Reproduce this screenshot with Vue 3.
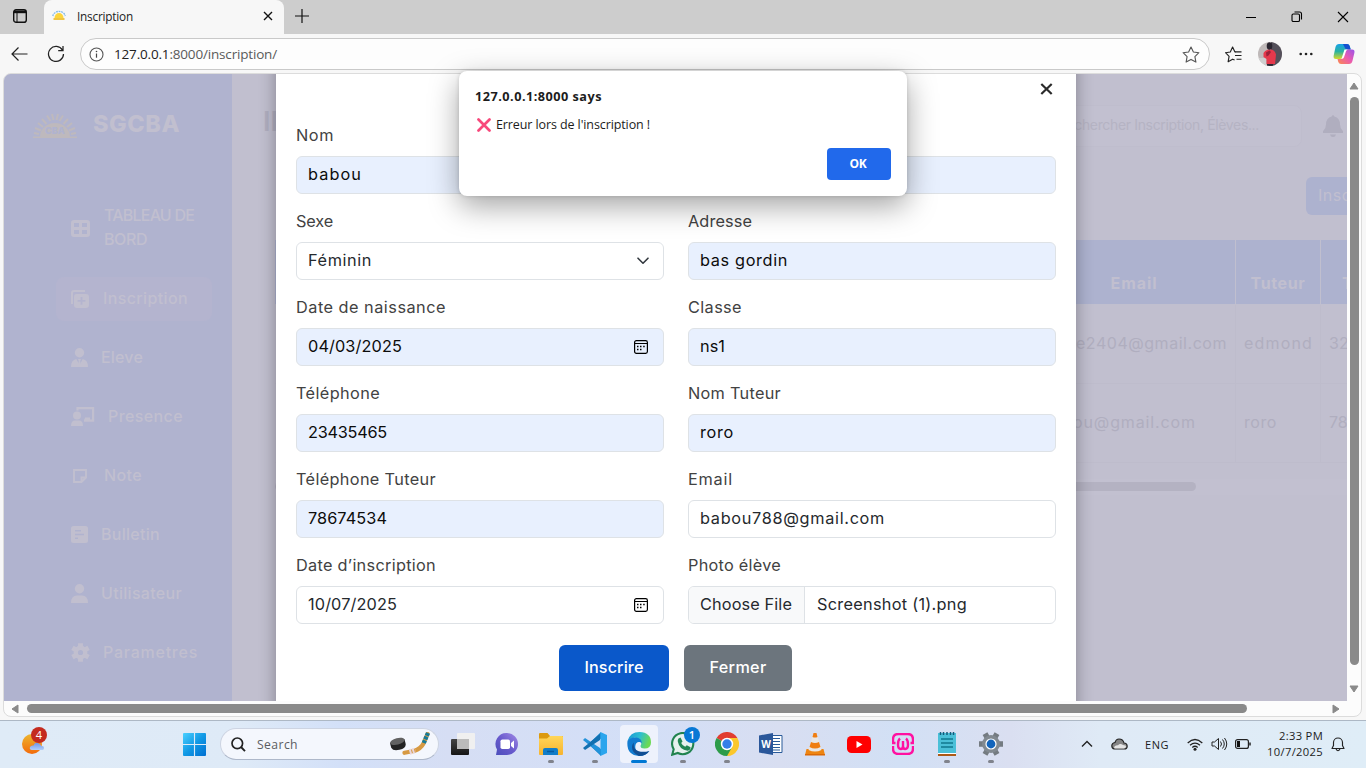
<script setup>
// Spreads a label's letters so that it takes up the given width.
const vFit = {
  mounted(el, { value }) {
    const w = el.getBoundingClientRect().width
    el.style.letterSpacing = (value - w) / el.textContent.length + 'px'
  },
}

const fields = [
  { label: 'Nom', lw: 38, value: 'babou', vw: 54, filled: true },
  { label: '', lw: 0, value: '', vw: 0, filled: true },
  { label: 'Sexe', lw: 37, value: 'Féminin', vw: 64, kind: 'select' },
  { label: 'Adresse', lw: 64, value: 'bas gordin', vw: 88, filled: true },
  { label: 'Date de naissance', lw: 150, value: '04/03/2025', vw: 94, filled: true, kind: 'date' },
  { label: 'Classe', lw: 54, value: 'ns1', vw: 25, filled: true },
  { label: 'Téléphone', lw: 84, value: '23435465', vw: 79, filled: true },
  { label: 'Nom Tuteur', lw: 93, value: 'roro', vw: 34, filled: true },
  { label: 'Téléphone Tuteur', lw: 140, value: '78674534', vw: 79, filled: true },
  { label: 'Email', lw: 45, value: 'babou788@gmail.com', vw: 185 },
  { label: 'Date d’inscription', lw: 140, value: '10/07/2025', vw: 89, kind: 'date' },
  { label: 'Photo élève', lw: 93, value: 'Screenshot (1).png', vw: 150, kind: 'file' },
]
</script>

<template>
  <div class="screen">
    <div class="tabs">
      <svg class="tabmenu" width="14" height="14" viewBox="0 0 14 14"><rect x=".7" y=".7" width="12.6" height="12.6" rx="2.4" fill="none" stroke="#111" stroke-width="1.4" /><path d="M1 1.5h12v2.7H1z" fill="#111" /><path d="M4 4v9.500" stroke="#111" stroke-width="1" /></svg>
      <div class="tab">
        <svg width="14" height="12" viewBox="0 0 14 12"><path d="M.8 6A6.300 5.600 0 0 1 13.200 6" fill="none" stroke="#7cb8ea" stroke-width="1.300" stroke-dasharray="1.800 .8" /><path d="M2.500 8a4.500 5 0 0 1 9 0z" fill="#fbd53c" /><path d="M1.500 9h11" stroke="#efc544" stroke-width="2" /></svg>
        <span v-fit="56" class="tabtitle">Inscription</span>
        <svg class="tabclose" width="10" height="10" viewBox="0 0 10 10"><path d="M1 1l8 8M9 1L1 9" stroke="#111" stroke-width="1.400" /></svg>
      </div>
      <svg class="newtab" width="14" height="14" viewBox="0 0 14 14"><path d="M7 0v14M0 7h14" stroke="#111" stroke-width="1.200" /></svg>
      <div class="winbtns">
        <svg width="12" height="12" viewBox="0 0 12 12"><path d="M1 6.500h10" stroke="#000" /></svg>
        <svg width="12" height="12" viewBox="0 0 12 12"><rect x="1" y="3" width="7.500" height="7.500" rx="1.300" fill="none" stroke="#000" stroke-width="1.100" /><path d="M3.500 1h5a2 2 0 0 1 2 2v5.500" fill="none" stroke="#000" stroke-width="1.100" /></svg>
        <svg width="12" height="12" viewBox="0 0 12 12"><path d="M1 1l10 10M11 1L1 11" stroke="#000" stroke-width="1.100" /></svg>
      </div>
    </div>

    <div class="toolbar">
      <svg class="back" width="17" height="16" viewBox="0 0 17 16"><path d="M16.500 8H1M7.500 1.500L1 8l6.500 6.500" fill="none" stroke="#222" stroke-width="1.200" /></svg>
      <svg class="reload" width="18" height="18" viewBox="0 0 18 18"><path d="M15.500 5.200A7.500 7.500 0 1 0 16.500 9M16 1v4.700h-4.800" fill="none" stroke="#222" stroke-width="1.250" /></svg>
      <div class="address">
        <svg width="15" height="15" viewBox="0 0 15 15"><circle cx="7.500" cy="7.500" r="6.500" fill="none" stroke="#555" stroke-width="1.100" /><path d="M7.500 6.500v4.200" stroke="#444" stroke-width="1.200" /><circle cx="7.500" cy="4.500" r=".8" fill="#444" /></svg>
        <span v-fit="163" class="url">127.0.0.1<i>:8000/inscription/</i></span>
        <svg class="star" width="18" height="17" viewBox="0 0 18 17"><path d="M9 1l2.400 5 5.500.7-4 3.900 1 5.500L9 13.400l-4.900 2.700 1-5.500-4-3.900 5.500-.7z" fill="none" stroke="#555" stroke-width="1.100" stroke-linejoin="round" /></svg>
      </div>
      <svg class="favs" width="18" height="17" viewBox="0 0 18 17"><path d="M11 5.800H9.800L7.600 1 5.300 6l-4.800.7 3.600 3.600-1 5.500 4.500-2.600 2 .9" fill="none" stroke="#222" stroke-width="1.150" stroke-linejoin="round" /><path d="M10.500 5.800h6M10 9.500h6.500M11.500 13.200h5" stroke="#222" stroke-width="1.150" /></svg>
      <svg class="avatar" width="24" height="24" viewBox="0 0 24 24"><defs><clipPath id="av"><circle cx="12" cy="12" r="12" /></clipPath></defs><g clip-path="url(#av)"><path d="M0 0h24v24H0z" fill="#bfb9b9" /><path d="M13 0h11v24H13z" fill="#54505a" /><path d="M0 16h8v8H0z" fill="#cfcfcf" /><path d="M5.500 11q1-2.500 4.500-3.500h3.500q3.500 1 4.500 5l-.5 5-.5 4.500H8.500L8.500 17l-3-2z" fill="#e5394c" /><path d="M9 22h6v2H9z" fill="#2d2633" /><ellipse cx="11.500" cy="4" rx="2.800" ry="3.800" fill="#292530" /><path d="M8 10.500l3.500-2 1.500 1.500-2.500 3.500-2 1z" fill="#9a2138" /></g></svg>
      <svg class="dots" width="14" height="4" viewBox="0 0 14 4"><circle cx="1.700" cy="2" r="1.300" /><circle cx="7" cy="2" r="1.300" /><circle cx="12.300" cy="2" r="1.300" /></svg>
      <svg class="copilot" width="22" height="20" viewBox="0 0 22 20"><defs><linearGradient id="cp1" x2="0" y2="1"><stop stop-color="#18a2e8" /><stop offset=".5" stop-color="#2ab2a0" /><stop offset="1" stop-color="#d8d829" /></linearGradient><linearGradient id="cp2" x1="1" x2="0" y2="1"><stop stop-color="#9a54ea" /><stop offset=".5" stop-color="#eb5baf" /><stop offset="1" stop-color="#fb8c4a" /></linearGradient></defs><path d="M6 0h8q2 0 2.700 2l1 3.500H14q-1.500 0-2 1.600l-2 6Q9 15 7 15H3Q0 15 .7 11.500L2.500 3Q3.300 0 6 0z" fill="url(#cp1)" /><path d="M10 0h4q2 0 2.700 2l1 3.500H14q-1.500 0-2-1.500z" fill="#1650cf" /><path d="M16 20H8q-2 0-2.700-2L4.500 15H8q1.500 0 2-1.700l2-6Q13 5.500 15 5.500h4q3 0 2.400 3.200l-1.900 8Q18.700 20 16 20z" fill="url(#cp2)" /><path d="M8.500 14.800l3-9.300h3.300q-1.400.5-1.800 1.800l-2 6q-.5 1.500-2.500 1.500z" fill="#fff" /></svg>
    </div>

    <div class="frame">
      <div class="view">
        <div class="site">
          <aside>
            <div class="brand">
              <svg width="46" height="27" viewBox="0 0 46 27"><path d="M1 26.500h44M2 22l5 1M3 17l6 2.500M6 12l5 4M10 8l4.500 5M15 4.500l3.500 5.500M20 3l1.500 6M26 3l-1.500 6M31 4.500L27.500 10M36 8l-4.500 5M40 12l-5 4M43 17l-6 2.500M44 22l-5 1" stroke="#beb9bd" stroke-width="2" /><path d="M8 26a15 14 0 0 1 30 0z" fill="#beb9bd" /><text x="23" y="23" text-anchor="middle" fill="#b0b3cf">CBA</text></svg>
              <b v-fit="87">SGCBA</b>
            </div>
            <nav>
              <a class="tall"><svg width="19" height="17" viewBox="0 0 19 17"><path fill-rule="evenodd" d="M3 0h13q3 0 3 3v11q0 3-3 3H3q-3 0-3-3V3Q0 0 3 0zM3 3v4h5V3zM11 3v4h5V3zM3 10v4h5v-4zM11 10v4h5v-4z" /></svg><span><em v-fit="90">TABLEAU DE</em><br><em v-fit="43">BORD</em></span></a>
              <a class="on"><svg width="18" height="18" viewBox="0 0 18 18"><path d="M14 1H3Q1 1 1 3v11" fill="none" stroke="#c1bfcf" stroke-width="2" /><path fill-rule="evenodd" d="M5.500 4H15q3 0 3 3v8q0 3-3 3H6q-3 0-3-3V7q0-3 2.500-3zM9.600 7v3h-3v1.700h3v3h1.800v-3h3V10h-3V7z" /></svg><span><em v-fit="85">Inscription</em></span></a>
              <a><svg width="17" height="19" viewBox="0 0 17 19"><circle cx="8.500" cy="4.700" r="4.700" /><path d="M0 19q0-7 5.300-8l3.200 6 3.200-6Q17 12 17 19z" /><path d="M7 11h3l-.8 2 .8 4-1.500 2L7 17l.8-4z" /></svg><span class="near"><em v-fit="42">Eleve</em></span></a>
              <a><svg width="24" height="19" viewBox="0 0 24 19"><path d="M6.500 3.500V1.200h15.600v12.500H13" fill="none" stroke="#c1bfcf" stroke-width="2.200" /><circle cx="6" cy="8.500" r="4" /><path d="M0 19q0-5.500 4-5.500h4q4 0 4 5.500zM14 10.500h5V14h-6z" /></svg><span class="near"><em v-fit="75">Presence</em></span></a>
              <a><svg class="in" width="14" height="14" viewBox="0 0 14 14"><path d="M1 1h12v7.500L8.500 13H1zM8.500 13V8.500H13" fill="none" stroke="#c1bfcf" stroke-width="1.900" /></svg><span><em v-fit="38">Note</em></span></a>
              <a><svg width="17" height="17" viewBox="0 0 17 17"><path fill-rule="evenodd" d="M2.500 0h12Q17 0 17 2.500v12q0 2.500-2.500 2.500h-12Q0 17 0 14.500v-12Q0 0 2.500 0zM4 4v1.500h6V4zM4 7.700v1.600h9V7.700zM4 11.500V13h3v-1.500z" /></svg><span class="near"><em v-fit="59">Bulletin</em></span></a>
              <a><svg width="17" height="19" viewBox="0 0 17 19"><circle cx="8.500" cy="4.700" r="4.700" /><path d="M0 19q0-7.500 6-7.500h5q6 0 6 7.500z" /></svg><span class="near"><em v-fit="81">Utilisateur</em></span></a>
              <a><svg width="19" height="19" viewBox="-10 -10 20 20"><circle r="5" fill="none" stroke="#c1bfcf" stroke-width="4.500" /><path d="M0-9.800V-5M0 9.800V5M-8.500-4.900L-4-2.500M8.500 4.900L4 2.500M-8.500 4.900L-4 2.500M8.500-4.900L4-2.500" stroke="#c1bfcf" stroke-width="5.200" /></svg><span class="near"><em v-fit="95">Parametres</em></span></a>
            </nav>
          </aside>
          <main>
            <header>
              <h1>II</h1>
              <div class="find"><span v-fit="201">Rechercher Inscription, Élèves...</span></div>
              <svg width="20" height="22" viewBox="0 0 20 22"><path d="M8.700 1.500a1.300 1.300 0 0 1 2.600 0Q17 3 17 9.500q0 4 3 6.800V18H0v-1.700q3-2.800 3-6.800Q3 3 8.700 1.500zM7 19.500h6Q12.500 22 10 22t-3-2.500z" fill="#b0aebf" /></svg>
            </header>
            <div class="add"><span v-fit="85">Inscription</span></div>
            <div class="table">
              <div class="th"></div><div class="th email"><b v-fit="47">Email</b></div><div class="th"><b v-fit="55">Tuteur</b></div><div class="th last"><b>Tel</b></div>
              <div></div><div><span v-fit="151">e2404@gmail.com</span></div><div><span v-fit="69">edmond</span></div><div><span>3243</span></div>
              <div></div><div class="second"><span v-fit="123">ou@gmail.com</span></div><div><span v-fit="33">roro</span></div><div><span>7867</span></div>
            </div>
            <div class="bar"><i></i></div>
          </main>
        </div>

        <section class="modal">
          <svg class="x" width="13" height="12" viewBox="0 0 13 12"><path d="M1.300 1l10.400 10M11.700 1L1.300 11" stroke="#2b2b2b" stroke-width="2.200" /></svg>
          <div class="form">
            <div v-for="(f, i) in fields" :key="i" class="field">
              <label><span v-if="f.label" v-fit="f.lw">{{ f.label }}</span></label>
              <div class="input" :class="{ filled: f.filled }">
                <span v-if="f.kind === 'file'" class="choose"><span v-fit="92">Choose File</span></span>
                <span v-if="f.value" v-fit="f.vw" class="value">{{ f.value }}</span>
                <svg v-if="f.kind === 'select'" class="chev" width="12" height="8" viewBox="0 0 12 8"><path d="M1 1.200l5 5 5-5" fill="none" stroke="#343a40" stroke-width="1.600" stroke-linecap="round" stroke-linejoin="round" /></svg>
                <svg v-if="f.kind === 'date'" class="cal" width="14" height="14" viewBox="0 0 14 14"><rect x=".6" y=".6" width="12.800" height="12.800" rx="1.800" fill="none" stroke="#000" stroke-width="1.200" /><path d="M1 3.500h12" stroke="#000" /><path d="M3 6.500h1.500M6 6.500h1.500M9.200 6.500h1.500M3 9.500h1.500M6 9.500h1.500" stroke="#000" stroke-width="1.300" /></svg>
              </div>
            </div>
          </div>
          <div class="actions">
            <button class="primary"><span v-fit="59">Inscrire</span></button>
            <button><span v-fit="57">Fermer</span></button>
          </div>
        </section>
      </div>
      <div class="vscroll">
        <svg width="10" height="8" viewBox="0 0 10 8"><path d="M5 1l4 6H1z" fill="#8a8a8a" stroke="#8a8a8a" stroke-linejoin="round" /></svg>
        <i></i>
        <svg width="10" height="8" viewBox="0 0 10 8"><path d="M5 7l4-6H1z" fill="#8a8a8a" stroke="#8a8a8a" stroke-linejoin="round" /></svg>
      </div>
      <div class="hscroll">
        <svg width="8" height="10" viewBox="0 0 8 10"><path d="M1 5l6-4v8z" fill="#8a8a8a" stroke="#8a8a8a" stroke-linejoin="round" /></svg>
        <i></i>
        <svg class="r" width="8" height="10" viewBox="0 0 8 10"><path d="M7 5L1 1v8z" fill="#8a8a8a" stroke="#8a8a8a" stroke-linejoin="round" /></svg>
      </div>
    </div>

    <div class="dialog">
      <b v-fit="127">127.0.0.1:8000 says</b>
      <p><svg width="14" height="14" viewBox="0 0 14 14"><path d="M1.500 1.500l11 11M12.500 1.500l-11 11" stroke="#f8487b" stroke-width="2.700" stroke-linecap="round" /></svg><span v-fit="154">Erreur lors de l'inscription !</span></p>
      <button><span v-fit="17">OK</span></button>
    </div>

    <footer>
      <div class="weather">
        <svg width="26" height="28" viewBox="0 0 26 28"><defs><linearGradient id="sun" x2="0" y2="1"><stop stop-color="#edb62f" /><stop offset="1" stop-color="#f36b0b" /></linearGradient><linearGradient id="cl" x2="0" y2="1"><stop stop-color="#6f94e8" /><stop offset="1" stop-color="#b2cffa" /></linearGradient></defs><circle cx="10" cy="17" r="10" fill="url(#sun)" /><path d="M10 23q-3-.5-2-3 1-2 3.500-1.500Q13 14 17.500 17q1.500.5 1.500 2 3-.5 3 2t-2 2z" fill="url(#cl)" /><circle cx="17" cy="8" r="8" fill="#c42b1f" /></svg>
        <span>4</span>
      </div>
      <svg class="start" width="24" height="24" viewBox="0 0 24 24"><defs><linearGradient id="w" x2="1" y2="1"><stop stop-color="#4bd0ff" /><stop offset=".5" stop-color="#1199e5" /><stop offset="1" stop-color="#006fd1" /></linearGradient></defs><path d="M0 1q0-1 1-1h10.400v11.400H0zM12.600 0H23q1 0 1 1v10.400H12.600zM0 12.600h11.400V24H1q-1 0-1-1zM12.600 12.600H24V23q0 1-1 1H12.600z" fill="url(#w)" /></svg>
      <div class="search">
        <svg width="15" height="15" viewBox="0 0 15 15"><circle cx="6.300" cy="6.300" r="5.300" fill="none" stroke="#222" stroke-width="1.700" /><path d="M10 10l4 4.200" stroke="#222" stroke-width="1.900" /></svg>
        <span v-fit="41">Search</span>
        <svg class="puck" width="42" height="24" viewBox="0 0 42 24"><g transform="rotate(-14 9 12)"><path d="M1.500 9v5q1 4 7.500 4t7.500-4V9z" fill="#232323" /><ellipse cx="9" cy="9.300" rx="7.500" ry="3.300" fill="#626262" /></g><path d="M38.500 2L34.500 11.500Q32 16.500 25 19l-9.500 1.800" fill="none" stroke="#d79a43" stroke-width="4.200" stroke-linecap="round" stroke-linejoin="round" /><path d="M39 1L34.800 11" stroke="#167b98" stroke-width="4.300" stroke-dasharray="3 1" /><path d="M20.500 20l6-1.700" stroke="#ead7dc" stroke-width="5.500" stroke-dasharray="2 1" /></svg>
      </div>
      <div class="apps">
        <div><svg width="24" height="22" viewBox="0 0 24 22"><defs><linearGradient id="tv" x2="0" y2="1"><stop stop-color="#444" /><stop offset="1" stop-color="#151515" /></linearGradient></defs><rect y="6" width="18" height="16" rx="1" fill="url(#tv)" /><rect x="6" width="18" height="16" rx="1" fill="#f0f0f0" /><path d="M6 6h12v10H6z" fill="#bbb" /></svg></div>
        <div><svg width="24" height="24" viewBox="0 0 24 24"><defs><linearGradient id="ch" x1="1" x2="0" y2="1"><stop stop-color="#a28be6" /><stop offset=".5" stop-color="#6a5bcd" /><stop offset="1" stop-color="#4b4ebb" /></linearGradient></defs><path d="M12 1a11 11 0 1 1 0 22H1l1-5.500A11 11 0 0 1 12 1z" fill="url(#ch)" /><rect x="5.500" y="7.500" width="9.500" height="9.500" rx="1.800" fill="#fff" /><path d="M16 11l3-2.500v8L16 14z" fill="#fff" /></svg></div>
        <div class="run"><svg width="24" height="22" viewBox="0 0 24 22"><defs><linearGradient id="fd" x2="0" y2="1"><stop stop-color="#ffd659" /><stop offset="1" stop-color="#f7b32e" /></linearGradient></defs><path d="M0 1q0-1 1-1h7.500l2.500 3h13v6H0z" fill="#dc9a10" /><path d="M0 5.500h8l3-2.500h12q1 0 1 1v17q0 1-1 1H1q-1 0-1-1z" fill="url(#fd)" /><path d="M4 22v-5q0-2 2-2h11q2 0 2 2v5z" fill="#117dc9" /><path d="M8 18.500h7" stroke="#075ba0" stroke-width="1.500" /></svg></div>
        <div class="run"><svg width="24" height="24" viewBox="0 0 24 24"><path d="M18 0L5.500 12 18 24V17L9 12l9-5.200z" fill="#1587cd" /><path d="M2 6L0 8l17 14v-6z" fill="#2392da" /><path d="M2 18L0 16 17 2v6z" fill="#1270b1" /><path d="M17.500 0L24 3v18l-6.500 3z" fill="#2ba5ed" /></svg></div>
        <div class="active"><svg width="24" height="24" viewBox="0 0 24 24"><defs><linearGradient id="eg" x2="1" y2=".3"><stop stop-color="#1794d6" /><stop offset=".55" stop-color="#2dbed0" /><stop offset="1" stop-color="#6bd955" /></linearGradient></defs><path d="M.5 9Q3 0 12.500 0 24 .5 24 10.500q0 6-6.500 6-4 0-4-2.500c3-5-2-9-7-8Q2 7 .5 9z" fill="url(#eg)" /><path d="M.5 9Q3 5 9 5.500c4 .3 6 3 5.800 6-3-3.500-7-.5-6.500 4 .6 6 7 7 14 3.500Q19 24 12 24-1 23 .5 9z" fill="#137cd0" /><path d="M7 10.500c-2 8 6 11 15.300 8.500Q19 24 12 24 5 21 5 15q0-3 2-4.500z" fill="#124f93" /></svg></div>
        <div class="run wa"><svg width="24" height="24" viewBox="0 0 24 24"><path d="M1.200 22.700l1.500-5.500A10.600 10.600 0 1 1 6.800 21z" fill="#e6f1ee" stroke="#21834f" stroke-width="2.100" /><path d="M7.500 6.500l2-1 2 4-1.300 1.600q1.200 2.700 4 3.700l1.600-1.600 3.700 2q.3 2.700-2.900 3.500Q8.500 18 6.800 9.500q-.3-1.700.7-3z" fill="#218653" /></svg><b>1</b></div>
        <div class="run"><svg width="24" height="24" viewBox="0 0 24 24"><path d="M12 12L1.600 6A12 12 0 0 1 22.400 6z" fill="#e13d30" /><path d="M12 12V24A12 12 0 0 0 22.400 6H12z" fill="#fbc72b" /><path d="M12 12l5.200 3L12 24A12 12 0 0 1 1.600 6z" fill="#2d9c4a" /><circle cx="12" cy="12" r="6.200" fill="#fff" /><circle cx="12" cy="12" r="4.700" fill="#357ee8" /></svg></div>
        <div><svg class="word" width="24" height="22" viewBox="0 0 24 22"><path d="M12 2.500h11v17H12z" fill="#fff" stroke="#295a99" /><path d="M14 5.500h7M14 8.500h7M14 11.500h7M14 14.500h7M14 17h7" stroke="#295a99" stroke-width="1" /><path d="M0 2.500L14 0v22L0 19.500z" fill="#2a579a" /><text x="7" y="15" text-anchor="middle" fill="#fff">W</text></svg></div>
        <div><svg width="20" height="24" viewBox="0 0 20 24"><path d="M1.500 17h17l1.500 6H0z" fill="#ee8511" /><path d="M8.500 1h3l5 17q-6.500 3-13 0z" fill="#e9e7e5" /><path d="M8.500 1h3l1 4q-2.500 1-5 0zM6 10q4 2 8 0l1.500 5q-5.500 3-11 0z" fill="#ef7e12" /><path d="M0 22h20v1.500H0z" fill="#dc6905" /></svg></div>
        <div><svg width="24" height="17" viewBox="0 0 24 17"><rect width="24" height="17" rx="4.500" fill="#f00" /><path d="M9.500 5v7l6-3.500z" fill="#fff" /></svg></div>
        <div><svg width="22" height="22" viewBox="0 0 22 22"><path d="M1 9V6.500Q1 1 6.500 1h9Q21 1 21 6.500V9M1 13v2.500Q1 21 6.500 21h9q5.500 0 5.500-5.500V13M0 10h3.500M18.500 10H22" fill="none" stroke="#ff11a1" stroke-width="2.400" /><path d="M8 5.500q-2 1.500-2 6 0 4.500 2.800 4.500 2.200 0 2.200-3V8v5q0 3 2.200 3 2.800 0 2.800-4.500 0-4.500-2-6" fill="none" stroke="#ff11a1" stroke-width="2.400" /></svg></div>
        <div class="run"><svg width="18" height="24" viewBox="0 0 18 24"><path d="M0 1h18v20H0z" fill="#4bc0d8" /><path d="M2.500 0v3M5.500 0v3M9 0v3M12.500 0v3M15.500 0v3" stroke="#155c7b" stroke-width="1.500" /><path d="M3 7h12M3 11h12M3 15h12" stroke="#12788e" stroke-width="1.500" /><path d="M0 21h18v1H0z" fill="#fff" /><path d="M0 22h18v2H0z" fill="#ac5a17" /></svg></div>
        <div class="run"><svg width="24" height="24" viewBox="-12 -12 24 24"><path d="M-12 0H12M-6-10.400L6 10.400M6-10.400L-6 10.400" stroke="#747b81" stroke-width="5.500" /><circle r="9" fill="#818990" /><circle r="5" fill="#1264bb" stroke="#fff" stroke-width="1.200" /></svg></div>
      </div>
      <div class="tray">
        <svg width="12" height="8" viewBox="0 0 12 8"><path d="M1 6.500l5-5 5 5" fill="none" stroke="#222" stroke-width="1.400" /></svg>
        <svg class="cloud" width="17" height="12" viewBox="0 0 17 12"><path d="M3.500 11Q.7 10.500.8 7.700T4 4.500Q5 1 8 1q4 0 5 4 3 0 3.200 3t-3 3z" fill="#858585" stroke="#222" stroke-width="1.100" /><path d="M3 10q.5-3 4-2.700Q9 5 12 7q3 0 3 1.500T13 10.400H4z" fill="#e4e4e4" /></svg>
        <span v-fit="24" class="eng">ENG</span>
        <svg class="wifi" width="16" height="13" viewBox="0 0 16 13"><path d="M.7 5Q8-2 15.300 5M3 7.300q5-4.500 10 0M5.300 9.500q2.700-2.500 5.400 0" fill="none" stroke="#222" stroke-width="1.200" /><circle cx="8" cy="11.300" r="1.500" fill="#222" /></svg>
        <svg class="vol" width="17" height="14" viewBox="0 0 17 14"><path d="M1 5h2.500L7.500 1.500v11L3.500 9H1z" fill="none" stroke="#222" /><path d="M9.500 4.500q2 2.500 0 5M11.500 2.500q3.500 4.500 0 9M13.500 1q4.500 6 0 12" fill="none" stroke="#222" /></svg>
        <svg class="bat" width="16" height="10" viewBox="0 0 16 10"><rect x=".6" y=".6" width="12.800" height="8.800" rx="2" fill="none" stroke="#222" stroke-width="1.200" /><path d="M2 2h3v6H2z" fill="#111" /><path d="M15 3.500v3" stroke="#222" stroke-width="1.500" /></svg>
        <div class="clock"><span v-fit="44">2:33 PM</span><br><span v-fit="56">10/7/2025</span></div>
        <svg width="14" height="15" viewBox="0 0 14 15"><path d="M2.500 8.500V5.500a4.500 4.500 0 0 1 9 0v3L13 11.500H1zM5 12q2 3.500 4 0" fill="none" stroke="#222" stroke-width="1.150" stroke-linejoin="round" /></svg>
      </div>
    </footer>
  </div>
</template>

<style>
body { margin: 0; overflow: hidden; }
</style>

<style scoped>
* { box-sizing: border-box; }
svg { flex: none; display: block; }
span, b, em { white-space: nowrap; font-style: normal; }
[class] > span, b, em, label span { display: inline-block; }
.screen { position: relative; width: 1366px; height: 768px; display: flex; flex-direction: column; background: #f7f7f7; overflow: hidden; font-family: "Open Sans", "Noto Sans", sans-serif; }

.tabs { height: 34px; flex: none; background: #cdcdcd; display: flex; align-items: center; padding-left: 13px; }
.tabmenu { margin-top: -2px; }
.tab { width: 240px; height: 34px; margin-left: 17px; padding: 0 11px 3px 8px; background: #f7f7f7; border-radius: 8px 8px 0 0; display: flex; align-items: center; }
.tabtitle { margin-left: 11px; font-size: 11.8px; color: #222; }
.tabclose { margin-left: auto; }
.newtab { margin: -3px 0 0 11px; }
.winbtns { margin-left: auto; padding-right: 17px; display: flex; gap: 34px; }

.toolbar { height: 39px; flex: none; display: flex; align-items: center; padding: 1px 11px 0 11px; }
.reload { margin-left: 19px; }
.address { width: 1131px; height: 32px; margin-left: 15px; border: 1px solid #c9c9c9; border-radius: 16px; background: #fdfdfd; display: flex; align-items: center; padding: 0 9px 0 8px; }
.url { margin-left: 10px; font-size: 13.500px; color: #222; }
.url i { font-style: normal; color: #5a5a5a; }
.star { margin-left: auto; }
.favs { margin-left: 15px; }
.avatar { margin-left: 15px; }
.dots { margin-left: 17px; fill: #222; }
.copilot { margin-left: 20px; }

.frame { width: 1359px; height: 644px; margin-left: 3px; flex: none; border: 1px solid #dcdcdc; border-radius: 8px; background: #fcfcfc; display: grid; grid-template: 627px 15px / 1343px 14px; overflow: hidden; }
.view { position: relative; overflow: hidden; font-family: Inter, "Open Sans", sans-serif; }
.site { display: flex; height: 627px; background: #c1bfcf; }
aside { width: 228px; flex: none; background: #b0b3cf; color: #c1bfcf; }
.brand { height: 120px; padding: 37px 0 0 28px; display: flex; align-items: flex-start; }
.brand text { font: 900 9px Inter, sans-serif; }
.brand b { margin: -1px 0 0 15px; font-size: 23.500px; line-height: 28px; font-weight: 800; }
nav { display: flex; flex-direction: column; gap: 15px; padding-left: 52px; }
nav a { width: 156px; height: 44px; padding: 0 0 1px 15px; border-radius: 8px; display: flex; align-items: center; font-size: 16px; font-weight: 500; line-height: 24px; }
nav a.tall { height: 68px; padding-bottom: 0; }
nav a.on { background: #b4b4cf; }
nav svg { fill: #c1bfcf; }
nav svg.in { margin: 0 3px 0 2px; }
nav a > span { margin: -2px 0 0 14px; }
nav a > span.near { margin-left: 13px; }
main { width: 1115px; flex: none; overflow: hidden; }
header { height: 103px; padding: 31px 4px 0 31px; display: flex; align-items: flex-start; }
h1 { margin: 1px 0 0; font-size: 27px; line-height: 32px; font-weight: 600; color: #b0aebf; }
.find { width: 280px; height: 42px; margin-left: auto; border: 1px solid #bfbdcd; border-radius: 8px; background: #c2c0d0; padding-right: 42px; font-size: 14px; line-height: 38px; color: #b5b3c3; text-align: right; }
header svg { margin: 10px 0 0 21px; }
.add { width: 110px; height: 38px; margin-left: 1074px; padding-left: 12px; border-radius: 6px; background: #adb2cf; color: #c1bfcf; font-size: 16px; line-height: 37px; }
.table { width: 1200px; margin: 25px 0 0 43px; display: grid; grid-template: 65px 79px 79px / 780px 181px 85px 100px; color: #b0aebf; font-size: 16px; }
.table > div { border-right: 1px solid #bebccc; border-bottom: 1px solid #bebccc; padding: 26px 8px 0; line-height: 24px; }
.table > div:nth-child(4n + 2) { padding-left: 21px; }
.table > div.second { padding-left: 18px; }
.table > .th { background: #adb2cf; border-color: #c0bfcf; color: #c1bfcf; padding-top: 31px; text-align: center; }
.table > div.email { padding-left: 0; padding-right: 22px; }
.table > .last { text-align: left; padding-left: 21px; }
.bar { height: 16px; margin: 16px 0 0 43px; background: #c2c0d0; padding-top: 3px; }
.bar i { display: block; width: 921px; height: 9px; border-radius: 5px; background: #b4b2c2; }

.modal { position: absolute; left: 272px; top: -20px; width: 800px; height: 667px; background: #fff; box-shadow: 0 0 16px rgba(0, 0, 0, .32); padding: 70px 20px 0; }
.x { position: absolute; left: 764px; top: 29px; }
.form { display: grid; grid-template-columns: 368px 368px; gap: 16px 24px; }
label { display: block; height: 24px; margin-bottom: 8px; font-size: 16.300px; line-height: 23px; color: #424242; }
.input { height: 38px; border: 1px solid #dee2e6; border-radius: 6px; padding: 0 15px 1px 11px; display: flex; align-items: center; font-size: 16.300px; color: #25292d; overflow: hidden; }
.value { margin-top: -2px; }
.filled { background: #e8f0fe; color: #0c0c0c; }
.chev, .cal { margin-left: auto; }
.chev { margin-right: -1px; }
.choose { align-self: stretch; margin: 0 12px -1px -11px; padding: 0 0 0 11px; width: 116px; border-right: 1px solid #dee2e6; background: #f8f9fa; line-height: 34px; }
.actions { display: flex; justify-content: center; gap: 15px; margin: 21px 0 0 -1px; }
button { border: 0; padding: 0; font-family: inherit; color: #fff; }
.actions button { width: 108px; height: 46px; border-radius: 6px; background: #6c757d; font-size: 16.200px; font-weight: 500; padding-bottom: 2px; }
.actions .primary { width: 110px; background: #0a58ca; }

.vscroll { display: flex; flex-direction: column; align-items: center; padding: 8px 0 0; }
.vscroll i { width: 9px; height: 568px; border-radius: 5px; background: #8a8a8a; margin: 7px 0 20px; }
.hscroll { grid-column: 1 / 3; display: flex; align-items: center; padding-left: 7px; }
.hscroll i { width: 1220px; height: 9px; border-radius: 5px; background: #8a8a8a; margin-left: 8px; }
.hscroll .r { margin-left: 85px; }

.dialog { position: absolute; left: 459px; top: 71px; width: 448px; height: 125px; border-radius: 8px; background: #fff; box-shadow: 0 10px 30px rgba(0, 0, 0, .36), 0 0 4px rgba(0, 0, 0, .15); padding: 16px; color: #1c1c1c; display: flex; flex-direction: column; align-items: flex-start; }
.dialog > b { font-size: 12.700px; line-height: 18px; }
.dialog p { margin: 11px 0 0 2px; display: flex; align-items: center; font-size: 12.500px; line-height: 18px; }
.dialog p span { margin-left: 5px; }
.dialog button { align-self: flex-end; margin-top: 14px; flex: none; width: 64px; height: 32px; border-radius: 4px; background: #2169eb; font-size: 12px; font-weight: 700; padding: 0 2px 2px 0; }

footer { height: 48px; margin-top: 3px; flex: none; border-top: 1px solid #adb8c5; background: linear-gradient(90deg, #dfebf7 0, #deeaf7 240px, #d3e0f8 340px, #d6def4 450px, #d3dff7 650px, #d8def1 780px, #d2e0f5 900px, #dadff1 1010px, #dfeaf6 1100px, #dfedf7); display: flex; align-items: center; padding-bottom: 1px; }
.weather { position: relative; margin-left: 22px; width: 26px; height: 28px; margin-top: -7px; }
.weather span { position: absolute; left: 9px; top: 0; width: 16px; text-align: center; font-size: 11px; line-height: 16px; color: #fff; }
.start { margin-left: 135px; width: 23px; height: 23px; }
.search { width: 219px; height: 32px; margin-left: 14px; border: 1px solid #cdd4e2; border-bottom-color: #aeb8ca; border-radius: 16px; background: #f4f7fd; display: flex; align-items: center; padding: 0 7px 0 10px; }
.search span { margin-left: 11px; font-size: 12.200px; color: #5b5d62; }
.puck { margin-left: auto; }
.apps { display: flex; margin-left: 2px; }
.apps div { position: relative; width: 44px; height: 46px; display: flex; align-items: center; justify-content: center; }
.run::after { content: ""; position: absolute; left: 19px; top: 39px; width: 6px; height: 3px; border-radius: 2px; background: #80838c; }
.apps .active { width: 38px; height: 38px; margin: 4px 3px; border-radius: 4px; background: #eef2fc; }
.active::after { content: ""; position: absolute; left: 11px; top: 35px; width: 16px; height: 3px; border-radius: 2px; background: #0078d4; }
.wa b { position: absolute; left: 23px; top: 6px; width: 16px; height: 16px; border-radius: 8px; background: #0878d5; color: #fff; text-align: center; font-size: 11px; line-height: 16px; font-weight: 600; }
.word text { font: 700 10px "Open Sans", sans-serif; }
.tray { margin-left: auto; padding-right: 21px; display: flex; align-items: center; color: #1c1c1c; }
.cloud { margin-left: 18px; }
.eng { margin-left: 17px; font-size: 11px; }
.wifi { margin-left: 18px; }
.vol { margin-left: 8px; }
.bat { margin-left: 7px; }
.clock { width: 58px; margin: 0 8px 0 14px; text-align: right; font-size: 11.200px; line-height: 16px; }
.clock span { display: inline-block; }
</style>
